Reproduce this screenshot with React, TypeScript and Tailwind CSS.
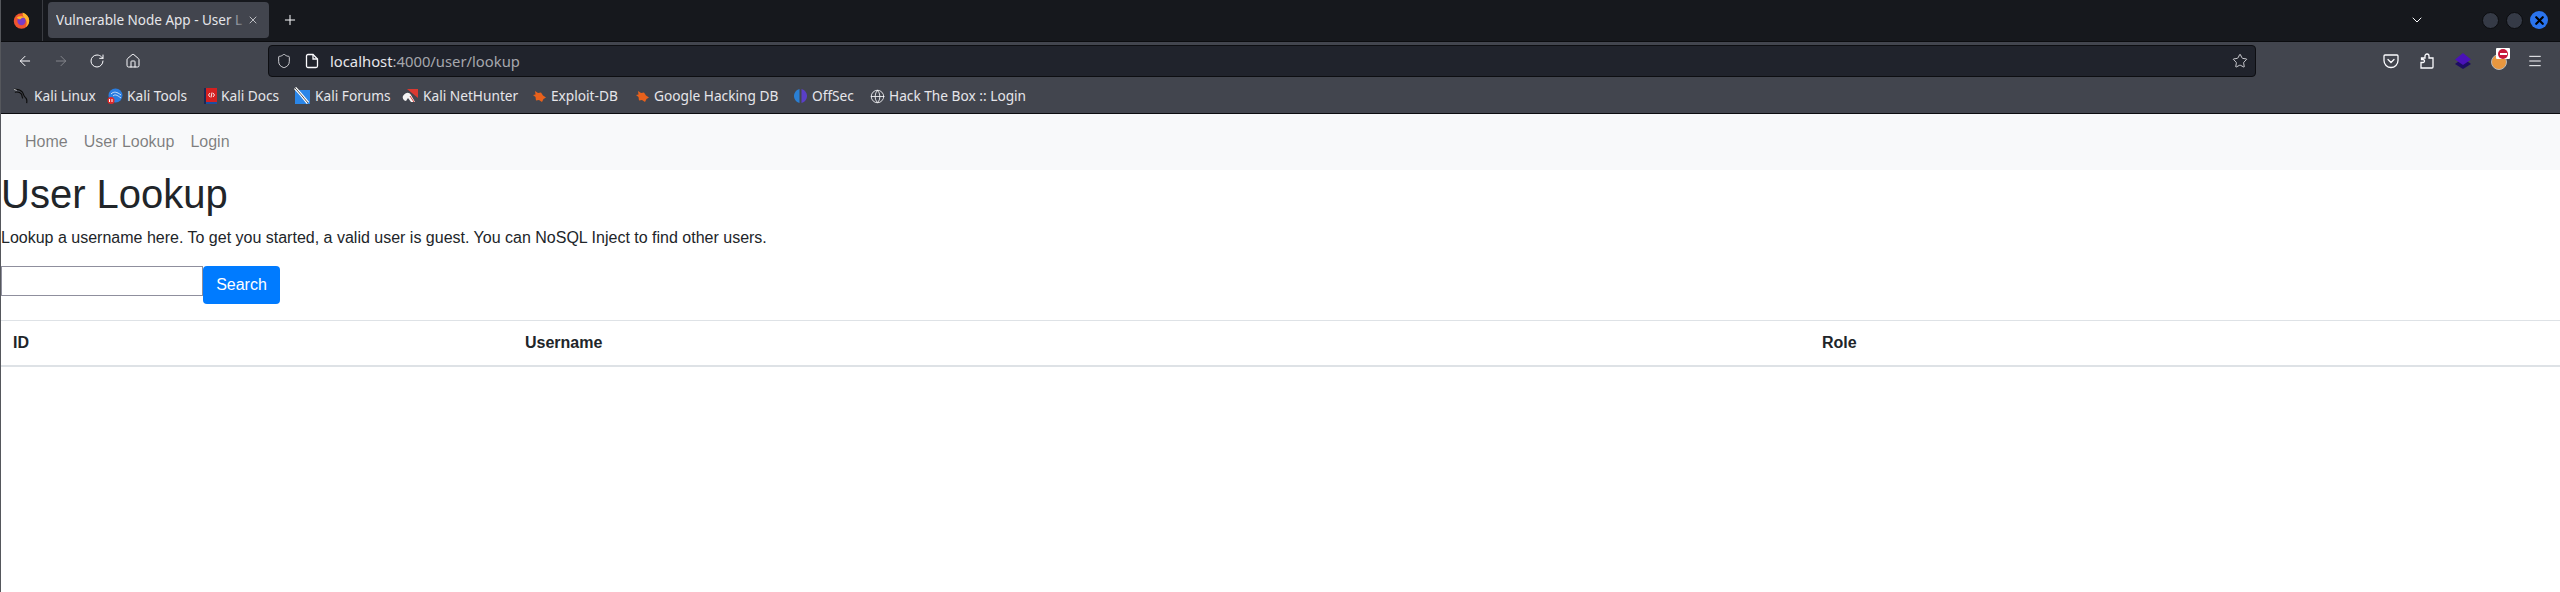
import { ArrowLeft, ArrowRight, ChevronDown, Globe, Home, Menu, Plus, RotateCw, Shield, Star, X } from "lucide-react";
import type { ReactNode } from "react";

function FirefoxLogo() {
  return (
    <svg width="17" height="17" viewBox="0 0 16 16">
      <circle cx="8" cy="8.500" r="7.300" fill="#f0542f" />
      <path d="M9 .5c3 1 5.800 3.500 6.200 7 .3 2.800-1 5.200-3.400 6.500 1.700-2.400 1.500-6-1-8.200C9.600 4.600 9 2.800 9 .5z" fill="#ffb32c" />
      <circle cx="8" cy="8.500" r="3.900" fill="#7a3cc6" />
      <path d="M3.500 5.200c2.200-1.500 5.200-1.500 7 .3-1.500-.4-2.600.1-3.100 1.200-1.200.5-2.900 0-3.900-1.500z" fill="#ffb32c" />
    </svg>
  );
}

function KaliIcon() {
  return (
    <svg width="17" height="18" viewBox="0 0 18 18" fill="none" stroke="#0b0b0b" strokeWidth="1.200">
      <path d="M1 2c4-.5 7 .5 9 3 1.500 2 1 4 3 5.500 1.500 1 2 3 1.500 6" />
      <path d="M2 5c3-.5 5.500 0 7 2 1 1.500 0 3 1.500 4.500" />
      <path d="M1 2l3 1" stroke="#e8e8e8" strokeWidth="0.800" />
    </svg>
  );
}

function ToolsIcon() {
  return (
    <svg width="16" height="16" viewBox="0 0 16 16">
      <circle cx="8.500" cy="7.500" r="7" fill="#2b7de0" />
      <path d="M4 6c3-3 6-2 10 1M6 8c2-2 4-1 8 2" fill="none" stroke="#cfe3fa" strokeWidth="1" />
      <rect x="0.500" y="9" width="7" height="7" rx="3.500" fill="#e02a2a" />
      <path d="M2.500 11v3M5 11v3" stroke="#fff" strokeWidth="1" />
    </svg>
  );
}

function DocsIcon() {
  return (
    <svg width="13" height="16" viewBox="0 0 13 16">
      <rect x="0" y="0" width="13" height="15" fill="#d42020" />
      <rect x="0" y="0" width="2" height="16" fill="#1c2a55" />
      <rect x="2" y="14" width="11" height="2" fill="#1c4fa0" />
      <path d="M6 5 4.500 7 6 9M9 5l1.500 2L9 9M8 4.500 7 9.500" fill="none" stroke="#fff" strokeWidth="0.900" />
    </svg>
  );
}

function ForumsIcon() {
  return (
    <svg width="17" height="18" viewBox="0 0 17 18">
      <rect x="1" y="3" width="15" height="14" fill="#2a86e8" />
      <path d="M1 1c4 4 8 9 13 15" stroke="#fff" strokeWidth="3" fill="none" />
      <path d="M1 1c4 4 8 9 13 15" stroke="#222" strokeWidth="0.800" fill="none" />
    </svg>
  );
}

function NetHunterIcon() {
  return (
    <svg width="17" height="16" viewBox="0 0 17 16">
      <path d="M5 1h11v9z" fill="#d93a32" />
      <path d="M1 8c3-4 6-4 8-1l4 7H9L6 10l-2 3C2 13 0 10 1 8z" fill="#f4f4f4" />
      <path d="M8 8l4 6" stroke="#d93a32" strokeWidth="1" />
    </svg>
  );
}

function BugIcon() {
  return (
    <svg width="15" height="15" viewBox="0 0 15 15">
      <path d="M3 2l3 2 3-.5 2 3 3 2-2.500 1.500L10 13 7 11 4 11.500 3.500 8 1 6l2.500-.5z" fill="#e8611c" />
    </svg>
  );
}

function OffSecIcon() {
  return (
    <svg width="15" height="16" viewBox="0 0 15 16">
      <path d="M6.500 1C3 2 1 5 1 8s2 6 5.500 7z" fill="#2a7fd4" />
      <path d="M8.500 1C12 2 14 5 14 8s-2 6-5.500 7z" fill="#5a3fc8" />
    </svg>
  );
}

function LayersIcon() {
  return (
    <svg width="16" height="16" viewBox="0 0 16 16">
      <path d="M8 5l8 6-8 5-8-5z" fill="#1d0d63" />
      <path d="M8 0l8 6.500-8 5.500-8-5.500z" fill="#4a12b8" />
    </svg>
  );
}

function FoxyIcon() {
  return (
    <div className="relative size-4">
      <div className="size-4 mt-[1px] rounded-full bg-[#e8973f] border border-[#b9b9b9]" />
      <div className="absolute -top-[5px] left-[5px] w-[14px] h-[11px] bg-white rounded-[1px] flex items-center justify-center">
        <div className="size-[10px] rounded-full bg-[#c8173a] flex items-center justify-center">
          <div className="w-[7px] h-[2px] bg-white" />
        </div>
      </div>
    </div>
  );
}

function PocketIcon() {
  return (
    <svg width="16" height="16" viewBox="0 0 16 16" fill="none" stroke="#fbfbfe" strokeWidth="1.300">
      <path d="M2 2h12a1 1 0 0 1 1 1v4.500a7 7 0 0 1-14 0V3a1 1 0 0 1 1-1z" />
      <path d="M5 6.500 8 9.500l3-3" strokeLinecap="round" />
    </svg>
  );
}

function PuzzleIcon() {
  return (
    <svg width="16" height="16" viewBox="0 0 16 16" fill="none" stroke="#fbfbfe" strokeWidth="1.300">
      <path d="M2 15V9.500h2a1.500 1.500 0 0 0 0-3H2.500V5H6V3a2 2 0 0 1 4 0v2h4v9a1 1 0 0 1-1 1z" />
    </svg>
  );
}

function PageIcon() {
  return (
    <svg width="16" height="16" viewBox="0 0 16 16" fill="none" stroke="#fbfbfe" strokeWidth="1.300">
      <path d="M4 1.500h5l4.500 4.500v7a1.500 1.500 0 0 1-1.500 1.500H4A1.500 1.500 0 0 1 2.500 13V3A1.500 1.500 0 0 1 4 1.500z" />
      <path d="M9 1.500V6h4.500" />
    </svg>
  );
}

const bookmarks: { label: string; icon: ReactNode; w: string }[] = [
  { label: "Kali Linux", icon: <KaliIcon />, w: "w-[94px]" },
  { label: "Kali Tools", icon: <ToolsIcon />, w: "w-[97px]" },
  { label: "Kali Docs", icon: <DocsIcon />, w: "w-[90px]" },
  { label: "Kali Forums", icon: <ForumsIcon />, w: "w-[108px]" },
  { label: "Kali NetHunter", icon: <NetHunterIcon />, w: "w-[130px]" },
  { label: "Exploit-DB", icon: <BugIcon />, w: "w-[103px]" },
  { label: "Google Hacking DB", icon: <BugIcon />, w: "w-[158px]" },
  { label: "OffSec", icon: <OffSecIcon />, w: "w-[77px]" },
  { label: "Hack The Box :: Login", icon: <Globe size={15} strokeWidth={1.300} color="#fbfbfe" />, w: "w-[170px]" },
];

export default function App() {
  return (
    <div className="h-[592px] overflow-hidden bg-white font-['Liberation_Sans',sans-serif] border-l border-[#55575c]">
      {/* title bar */}
      <div className="h-[42px] bg-[#16181d] border-b border-[#0b0c0f] flex items-start font-['Noto_Sans',sans-serif]">
        <div className="w-[42px] h-[41px] flex items-center justify-center border-r border-[#3a3c42]">
          <FirefoxLogo />
        </div>
        <div className="relative ml-[5px] mt-[2px] w-[221px] h-9 rounded-[4px] bg-[#42454e] flex items-center pl-2 pr-[10px] text-[#e6e6ea] text-[13.5px]">
          <span className="flex-1 overflow-hidden whitespace-nowrap">Vulnerable Node App - User L</span>
          <div className="absolute right-[22px] top-0 h-9 w-5 bg-gradient-to-r from-transparent to-[#42454e]" />
          <X size={12} strokeWidth={1.500} />
        </div>
        <div className="ml-[13px] h-10 flex items-center">
          <Plus size={16} color="#fbfbfe" strokeWidth={1.500} />
        </div>
        <div className="ml-auto h-10 flex items-center">
          <ChevronDown size={16} color="#fbfbfe" strokeWidth={1.500} />
          <div className="ml-[57px] size-[17px] rounded-full bg-[#353a46] border border-[#0b0c0f]" />
          <div className="ml-[7px] size-[17px] rounded-full bg-[#353a46] border border-[#0b0c0f]" />
          <div className="ml-[7px] mr-[12px] size-[18px] rounded-full bg-[#2a74ee] flex items-center justify-center">
            <X size={13} color="#000" strokeWidth={4} />
          </div>
        </div>
      </div>

      {/* toolbar */}
      <div className="h-[38px] bg-[#42454e] flex items-center text-[#fbfbfe]">
        <div className="w-[267px] flex items-center pl-4 gap-5">
          <ArrowLeft size={16} strokeWidth={1.500} />
          <ArrowRight size={16} strokeWidth={1.500} color="#83858b" />
          <RotateCw size={16} strokeWidth={1.500} />
          <Home size={16} strokeWidth={1.500} />
        </div>
        <div className="w-[1988px] h-8 rounded-[4px] bg-[#20232c] border border-[#0d0e12] flex items-center pl-[7px] pr-[7px] text-[14.8px] text-[#e6e6ea] font-['Noto_Sans',sans-serif]">
          <Shield size={16} strokeWidth={1.300} />
          <div className="ml-[12px]">
            <PageIcon />
          </div>
          <span className="ml-[10px] flex-1">
            localhost<span className="text-[#a6a7ac]">:4000/user/lookup</span>
          </span>
          <Star size={16} strokeWidth={1.300} />
        </div>
        <div className="flex-1 flex items-center pl-[127px] gap-5">
          <PocketIcon />
          <PuzzleIcon />
          <LayersIcon />
          <FoxyIcon />
          <Menu size={16} strokeWidth={1.500} />
        </div>
      </div>

      {/* bookmarks */}
      <div className="h-[34px] bg-[#42454e] border-b border-[#0b0c0f] flex items-center pl-3 text-[#e6e6ea] text-[13.7px] font-['Noto_Sans',sans-serif]">
        {bookmarks.map((b) => (
          <div key={b.label} className={`flex items-center gap-[4px] shrink-0 whitespace-nowrap ${b.w}`}>
            {b.icon}
            <span>{b.label}</span>
          </div>
        ))}
      </div>

      {/* page */}
      <nav className="h-14 bg-[#f8f9fa] flex items-center pl-4 text-[16px] text-[#00000080]">
        <a className="px-2">Home</a>
        <a className="px-2">User Lookup</a>
        <a className="px-2">Login</a>
      </nav>
      <h1 className="text-[40px] leading-[48px] text-[#212529] mb-2">User Lookup</h1>
      <p className="text-[16px] leading-6 text-[#212529] mb-4">
        Lookup a username here. To get you started, a valid user is guest. You can NoSQL Inject to find other users.
      </p>
      <form className="flex items-start">
        <input className="w-[202px] h-[30px] border border-[#8f8f9d] bg-white" />
        <button type="button" className="w-[77px] h-[38px] rounded-[4px] bg-[#007bff] text-white text-[16px]">
          Search
        </button>
      </form>
      <table className="mt-4 w-full table-fixed text-[16px] text-[#212529] border-t border-[#dee2e6]">
        <thead>
          <tr className="border-b-2 border-[#dee2e6]">
            <th className="w-[512px] px-3 py-[10px] leading-6 text-left font-bold">ID</th>
            <th className="w-[1297px] px-3 py-[10px] leading-6 text-left font-bold">Username</th>
            <th className="px-3 py-[10px] leading-6 text-left font-bold">Role</th>
          </tr>
        </thead>
      </table>
    </div>
  );
}
